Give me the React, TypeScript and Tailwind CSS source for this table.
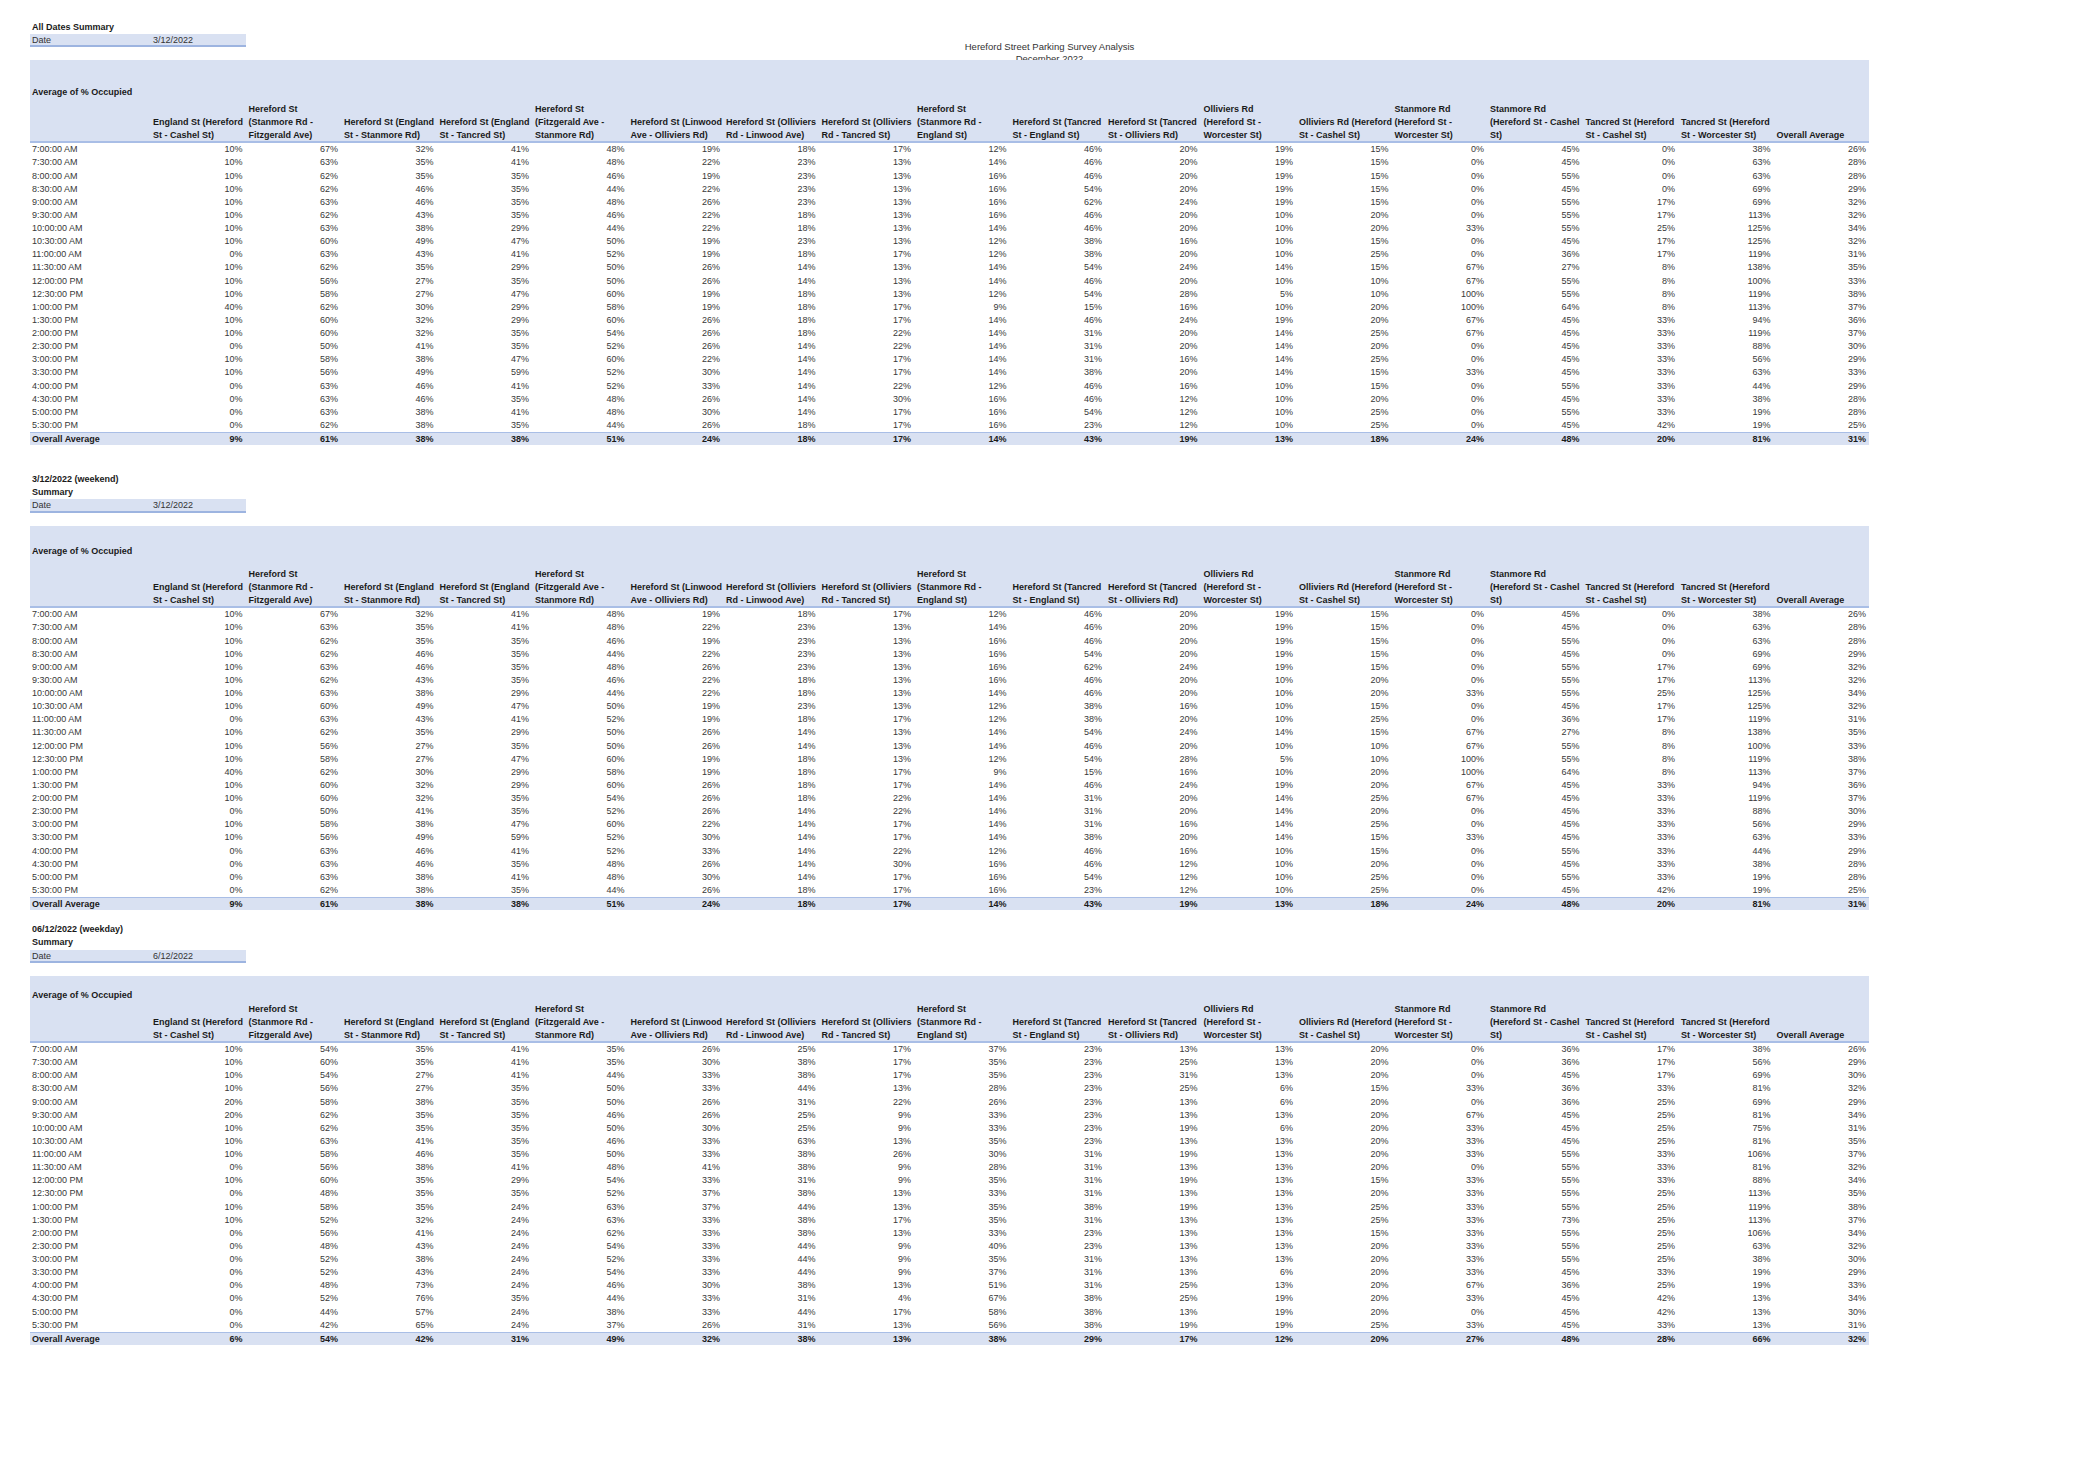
import React from 'react';

const FONT = { fontFamily: '"Liberation Sans", Arial, sans-serif' };

const TIMES = [
  '7:00:00 AM', '7:30:00 AM', '8:00:00 AM', '8:30:00 AM', '9:00:00 AM', '9:30:00 AM',
  '10:00:00 AM', '10:30:00 AM', '11:00:00 AM', '11:30:00 AM', '12:00:00 PM', '12:30:00 PM',
  '1:00:00 PM', '1:30:00 PM', '2:00:00 PM', '2:30:00 PM', '3:00:00 PM', '3:30:00 PM',
  '4:00:00 PM', '4:30:00 PM', '5:00:00 PM', '5:30:00 PM',
];

const HEADERS: string[][] = [
  ['England St (Hereford', 'St - Cashel St)'],
  ['Hereford St', '(Stanmore Rd -', 'Fitzgerald Ave)'],
  ['Hereford St (England', 'St - Stanmore Rd)'],
  ['Hereford St (England', 'St - Tancred St)'],
  ['Hereford St', '(Fitzgerald Ave -', 'Stanmore Rd)'],
  ['Hereford St (Linwood', 'Ave - Olliviers Rd)'],
  ['Hereford St (Olliviers', 'Rd - Linwood Ave)'],
  ['Hereford St (Olliviers', 'Rd - Tancred St)'],
  ['Hereford St', '(Stanmore Rd -', 'England St)'],
  ['Hereford St (Tancred', 'St - England St)'],
  ['Hereford St (Tancred', 'St - Olliviers Rd)'],
  ['Olliviers Rd', '(Hereford St -', 'Worcester St)'],
  ['Olliviers Rd (Hereford', 'St - Cashel St)'],
  ['Stanmore Rd', '(Hereford St -', 'Worcester St)'],
  ['Stanmore Rd', '(Hereford St - Cashel', 'St)'],
  ['Tancred St (Hereford', 'St - Cashel St)'],
  ['Tancred St (Hereford', 'St - Worcester St)'],
  ['Overall Average'],
];

// all dates / weekend (same survey day)
const WEEKEND: number[][] = [
  [10, 67, 32, 41, 48, 19, 18, 17, 12, 46, 20, 19, 15, 0, 45, 0, 38, 26],
  [10, 63, 35, 41, 48, 22, 23, 13, 14, 46, 20, 19, 15, 0, 45, 0, 63, 28],
  [10, 62, 35, 35, 46, 19, 23, 13, 16, 46, 20, 19, 15, 0, 55, 0, 63, 28],
  [10, 62, 46, 35, 44, 22, 23, 13, 16, 54, 20, 19, 15, 0, 45, 0, 69, 29],
  [10, 63, 46, 35, 48, 26, 23, 13, 16, 62, 24, 19, 15, 0, 55, 17, 69, 32],
  [10, 62, 43, 35, 46, 22, 18, 13, 16, 46, 20, 10, 20, 0, 55, 17, 113, 32],
  [10, 63, 38, 29, 44, 22, 18, 13, 14, 46, 20, 10, 20, 33, 55, 25, 125, 34],
  [10, 60, 49, 47, 50, 19, 23, 13, 12, 38, 16, 10, 15, 0, 45, 17, 125, 32],
  [0, 63, 43, 41, 52, 19, 18, 17, 12, 38, 20, 10, 25, 0, 36, 17, 119, 31],
  [10, 62, 35, 29, 50, 26, 14, 13, 14, 54, 24, 14, 15, 67, 27, 8, 138, 35],
  [10, 56, 27, 35, 50, 26, 14, 13, 14, 46, 20, 10, 10, 67, 55, 8, 100, 33],
  [10, 58, 27, 47, 60, 19, 18, 13, 12, 54, 28, 5, 10, 100, 55, 8, 119, 38],
  [40, 62, 30, 29, 58, 19, 18, 17, 9, 15, 16, 10, 20, 100, 64, 8, 113, 37],
  [10, 60, 32, 29, 60, 26, 18, 17, 14, 46, 24, 19, 20, 67, 45, 33, 94, 36],
  [10, 60, 32, 35, 54, 26, 18, 22, 14, 31, 20, 14, 25, 67, 45, 33, 119, 37],
  [0, 50, 41, 35, 52, 26, 14, 22, 14, 31, 20, 14, 20, 0, 45, 33, 88, 30],
  [10, 58, 38, 47, 60, 22, 14, 17, 14, 31, 16, 14, 25, 0, 45, 33, 56, 29],
  [10, 56, 49, 59, 52, 30, 14, 17, 14, 38, 20, 14, 15, 33, 45, 33, 63, 33],
  [0, 63, 46, 41, 52, 33, 14, 22, 12, 46, 16, 10, 15, 0, 55, 33, 44, 29],
  [0, 63, 46, 35, 48, 26, 14, 30, 16, 46, 12, 10, 20, 0, 45, 33, 38, 28],
  [0, 63, 38, 41, 48, 30, 14, 17, 16, 54, 12, 10, 25, 0, 55, 33, 19, 28],
  [0, 62, 38, 35, 44, 26, 18, 17, 16, 23, 12, 10, 25, 0, 45, 42, 19, 25],
];
const WEEKEND_AVG = [9, 61, 38, 38, 51, 24, 18, 17, 14, 43, 19, 13, 18, 24, 48, 20, 81, 31];

const WEEKDAY: number[][] = [
  [10, 54, 35, 41, 35, 26, 25, 17, 37, 23, 13, 13, 20, 0, 36, 17, 38, 26],
  [10, 60, 35, 41, 35, 30, 38, 17, 35, 23, 25, 13, 20, 0, 36, 17, 56, 29],
  [10, 54, 27, 41, 44, 33, 38, 17, 35, 23, 31, 13, 20, 0, 45, 17, 69, 30],
  [10, 56, 27, 35, 50, 33, 44, 13, 28, 23, 25, 6, 15, 33, 36, 33, 81, 32],
  [20, 58, 38, 35, 50, 26, 31, 22, 26, 23, 13, 6, 20, 0, 36, 25, 69, 29],
  [20, 62, 35, 35, 46, 26, 25, 9, 33, 23, 13, 13, 20, 67, 45, 25, 81, 34],
  [10, 62, 35, 35, 50, 30, 25, 9, 33, 23, 19, 6, 20, 33, 45, 25, 75, 31],
  [10, 63, 41, 35, 46, 33, 63, 13, 35, 23, 13, 13, 20, 33, 45, 25, 81, 35],
  [10, 58, 46, 35, 50, 33, 38, 26, 30, 31, 19, 13, 20, 33, 55, 33, 106, 37],
  [0, 56, 38, 41, 48, 41, 38, 9, 28, 31, 13, 13, 20, 0, 55, 33, 81, 32],
  [10, 60, 35, 29, 54, 33, 31, 9, 35, 31, 19, 13, 15, 33, 55, 33, 88, 34],
  [0, 48, 35, 35, 52, 37, 38, 13, 33, 31, 13, 13, 20, 33, 55, 25, 113, 35],
  [10, 58, 35, 24, 63, 37, 44, 13, 35, 38, 19, 13, 25, 33, 55, 25, 119, 38],
  [10, 52, 32, 24, 63, 33, 38, 17, 35, 31, 13, 13, 25, 33, 73, 25, 113, 37],
  [0, 56, 41, 24, 62, 33, 38, 13, 33, 23, 13, 13, 15, 33, 55, 25, 106, 34],
  [0, 48, 43, 24, 54, 33, 44, 9, 40, 23, 13, 13, 20, 33, 55, 25, 63, 32],
  [0, 52, 38, 24, 52, 33, 44, 9, 35, 31, 13, 13, 20, 33, 55, 25, 38, 30],
  [0, 52, 43, 24, 54, 33, 44, 9, 37, 31, 13, 6, 20, 33, 45, 33, 19, 29],
  [0, 48, 73, 24, 46, 30, 38, 13, 51, 31, 25, 13, 20, 67, 36, 25, 19, 33],
  [0, 52, 76, 35, 44, 33, 31, 4, 67, 38, 25, 19, 20, 33, 45, 42, 13, 34],
  [0, 44, 57, 24, 38, 33, 44, 17, 58, 38, 13, 19, 20, 0, 45, 42, 13, 30],
  [0, 42, 65, 24, 37, 26, 31, 13, 56, 38, 19, 19, 25, 33, 45, 33, 13, 31],
];
const WEEKDAY_AVG = [6, 54, 42, 31, 49, 32, 38, 13, 38, 29, 17, 12, 20, 27, 48, 28, 66, 32];

interface PivotSectionProps {
  heading: string[];
  date: string;
  // blank space in the band above "Average of % Occupied" and the header row height differ per sheet
  bandTopClass: string;
  headerClass: string;
  rows: number[][];
  average: number[];
}

function PivotSection({ heading, date, bandTopClass, headerClass, rows, average }: PivotSectionProps) {
  return (
    <div className="ml-[30px] w-[1839px]">
      {heading.map((line) => (
        <div key={line} className="h-[13.13px] pl-[2px] text-[9px] font-bold leading-[13.13px] text-[#1a1a1a]">
          {line}
        </div>
      ))}

      <div className="grid h-[13.13px] w-[216px] grid-cols-[120px_96px] border-b-2 border-[#9db4e0] bg-[#d9e1f2] text-[9px] leading-[12px] text-[#333]">
        <div className="pl-[2px]">Date</div>
        <div className="pl-[3px]">{date}</div>
      </div>

      <div className="h-[13.13px]" />

      <div className="relative z-10 border-b-2 border-[#a9bee6] bg-[#d9e1f2]">
        <div className={bandTopClass} />
        <div className="h-[13.13px] pl-[2px] text-[9px] font-bold leading-[13.13px] text-[#1a1a1a]">
          Average of % Occupied
        </div>
        <div className={`grid grid-cols-[120px_repeat(18,95.5px)] ${headerClass}`}>
          <div />
          {HEADERS.map((lines, i) => (
            <div key={i} className="flex translate-y-[1px] flex-col justify-end pl-[3px] text-[9px] font-bold leading-[13px] text-[#1a1a1a]">
              {lines.map((l) => (
                <div key={l} className="whitespace-nowrap">
                  {l}
                </div>
              ))}
            </div>
          ))}
        </div>
      </div>

      {rows.map((row, r) => (
        <div key={TIMES[r]} className="grid h-[13.13px] grid-cols-[120px_repeat(18,95.5px)] text-[9px] leading-[13.13px] text-[#383838]">
          <div className="pl-[2px]">{TIMES[r]}</div>
          {row.map((v, c) => (
            <div key={c} className="pr-[3px] text-right">
              {v}%
            </div>
          ))}
        </div>
      ))}

      <div className="grid h-[13.13px] grid-cols-[120px_repeat(18,95.5px)] border-t border-[#a9bee6] bg-[#d9e1f2] text-[9px] font-bold leading-[12px] text-[#1a1a1a]">
        <div className="pl-[2px]">Overall Average</div>
        {average.map((v, c) => (
          <div key={c} className="pr-[3px] text-right">
            {v}%
          </div>
        ))}
      </div>
    </div>
  );
}

export default function App() {
  return (
    <div className="relative h-[1484px] w-[2099px] overflow-hidden bg-white pt-[20.5px]" style={FONT}>
      <div className="absolute left-0 top-[41px] z-0 w-full text-center text-[9.5px] leading-[12px] text-[#333]">
        <div>Hereford Street Parking Survey Analysis</div>
        <div>December 2022</div>
      </div>

      <PivotSection
        heading={['All Dates Summary']}
        date="3/12/2022"
        bandTopClass="h-[26.26px]"
        headerClass="h-[42px]"
        rows={WEEKEND}
        average={WEEKEND_AVG}
      />
      <div className="h-[28px]" />
      <PivotSection
        heading={['3/12/2022 (weekend)', 'Summary']}
        date="3/12/2022"
        bandTopClass="h-[19.5px]"
        headerClass="h-[48px]"
        rows={WEEKEND}
        average={WEEKEND_AVG}
      />
      <div className="h-[13.13px]" />
      <PivotSection
        heading={['06/12/2022 (weekday)', 'Summary']}
        date="6/12/2022"
        bandTopClass="h-[13.13px]"
        headerClass="h-[39px]"
        rows={WEEKDAY}
        average={WEEKDAY_AVG}
      />
    </div>
  );
}
